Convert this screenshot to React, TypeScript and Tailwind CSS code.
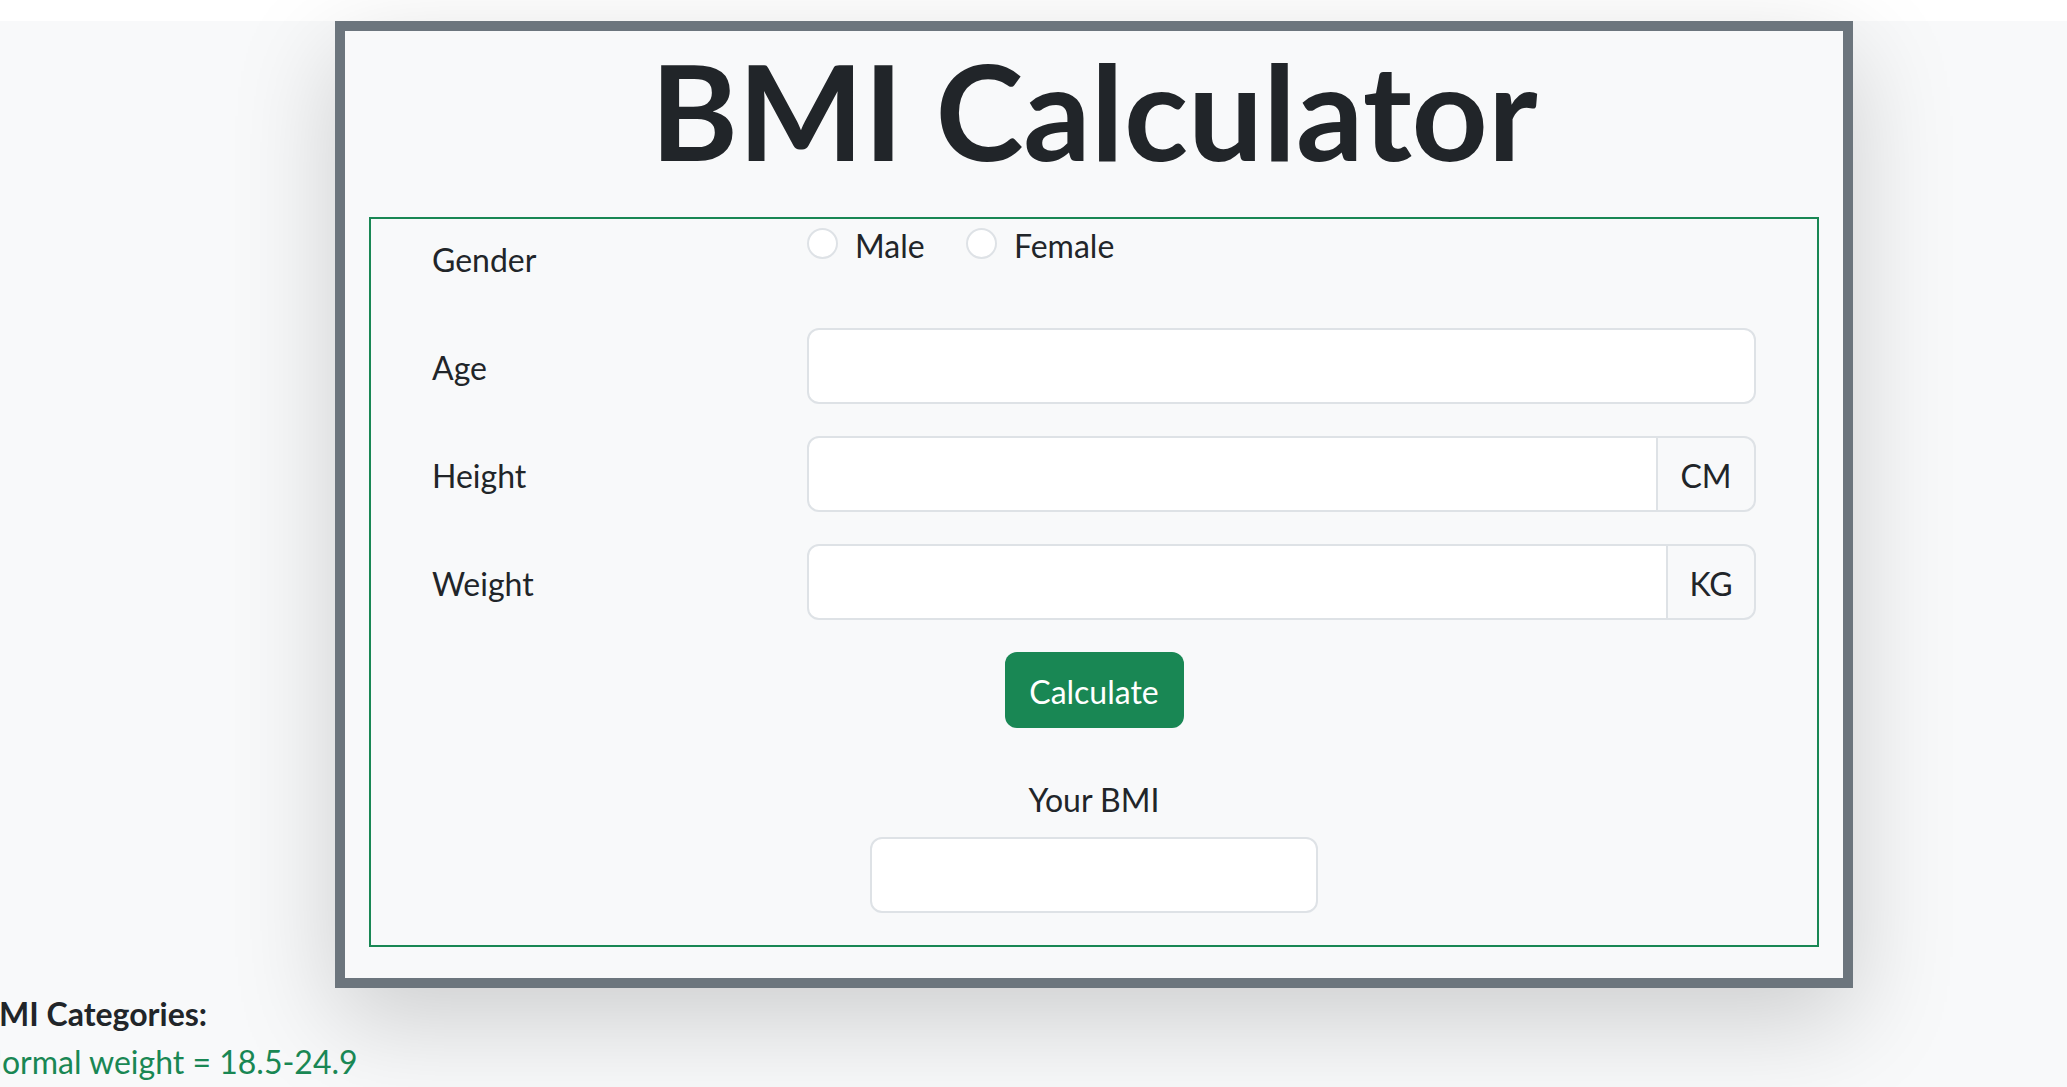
import React from "react";

function Label({ children }: { children: React.ReactNode }) {
  return <div className="w-[375px] shrink-0 pt-[16px] pb-[12px] leading-[48px]">{children}</div>;
}

function TextInput({ className = "" }: { className?: string }) {
  return (
    <input
      type="text"
      className={"h-[76px] bg-white border-2 border-[#dee2e6] outline-none px-[24px] text-[32px] " + className}
    />
  );
}

function Radio({ label, width }: { label: string; width: string }) {
  return (
    <div className={"flex items-start " + width}>
      <span className="mt-[8px] w-[31px] h-[31px] rounded-full border-2 border-[#dee2e6] bg-white shrink-0" />
      <span className="ml-[17px] mt-[2px] leading-[48px]">{label}</span>
    </div>
  );
}

export default function App() {
  return (
    <div className="min-h-screen bg-white font-['Lato',sans-serif] text-[32px] text-[#212529] overflow-hidden">
      <div className="h-[21px] bg-white" />
      <div className="bg-[#f8f9fa] min-h-[1066px]">
        <div className="ml-[335px] w-[1518px] border-[10px] border-[#6c757d] bg-[#f8f9fa] shadow-[0_32px_96px_rgba(0,0,0,0.175)] px-[24px] pb-[31px]">
          <h1 className="text-center text-[133px] leading-[157px] font-bold mb-[29px]">BMI Calculator</h1>
          <div className="border-2 border-[#198754] px-[61px] pt-[1px] pb-[32px]">
            <div className="flex items-start">
              <Label>Gender</Label>
              <div className="flex items-start">
                <Radio label="Male" width="w-[159px]" />
                <Radio label="Female" width="w-[200px]" />
              </div>
            </div>
            <div className="flex items-start mt-[32px]">
              <Label>Age</Label>
              <TextInput className="flex-1 min-w-0 rounded-[12px]" />
            </div>
            <div className="flex items-start mt-[32px]">
              <Label>Height</Label>
              <div className="flex flex-1 min-w-0">
                <TextInput className="flex-1 min-w-0 rounded-l-[12px]" />
                <div className="w-[100px] h-[76px] -ml-[2px] border-2 border-[#dee2e6] bg-[#f8f9fa] rounded-r-[12px] flex items-center justify-center leading-[48px] pt-[3px]">
                  CM
                </div>
              </div>
            </div>
            <div className="flex items-start mt-[32px]">
              <Label>Weight</Label>
              <div className="flex flex-1 min-w-0">
                <TextInput className="flex-1 min-w-0 rounded-l-[12px]" />
                <div className="w-[90px] h-[76px] -ml-[2px] border-2 border-[#dee2e6] bg-[#f8f9fa] rounded-r-[12px] flex items-center justify-center leading-[48px] pt-[3px]">
                  KG
                </div>
              </div>
            </div>
            <div className="flex justify-center mt-[32px]">
              <button className="w-[179px] h-[76px] bg-[#198754] text-white rounded-[12px] text-[32px] leading-[48px] pt-[3px]">
                Calculate
              </button>
            </div>
            <div className="text-center leading-[48px] mt-[48px]">Your BMI</div>
            <div className="flex justify-center mt-[13px]">
              <TextInput className="w-[448px] rounded-[12px]" />
            </div>
          </div>
        </div>
        <div className="ml-[-22px] mt-[2px] leading-[48px]">
          <p className="font-bold">BMI Categories:</p>
          <p className="text-[#198754]">Normal weight = 18.5-24.9</p>
        </div>
      </div>
    </div>
  );
}
